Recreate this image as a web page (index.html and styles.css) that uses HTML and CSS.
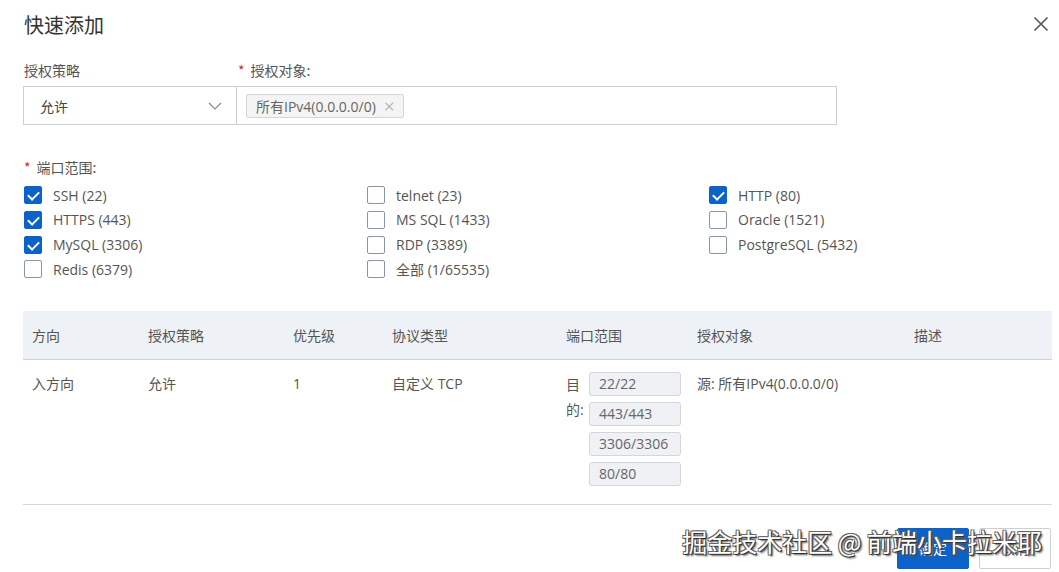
FILE: index.html
```html
<!DOCTYPE html>
<html lang="zh-CN">
<head>
    <meta charset="UTF-8" />
    <title>快速添加</title>
    <link rel="stylesheet" href="styles.css">
</head>
<body>
  <div class="dialog">
    <div class="dialog-header">
      <span class="dialog-title">快速添加</span>
      <svg class="close" width="16" height="16" viewBox="0 0 16 16"><path d="M1.5 1.5 L14.5 14.5 M14.5 1.5 L1.5 14.5" stroke="#555" stroke-width="1.6" fill="none"/></svg>
    </div>

    <div class="form-row">
      <div class="field field-policy">
        <div class="label">授权策略</div>
        <div class="select">
          <span>允许</span>
          <svg width="14" height="8" viewBox="0 0 14 8"><path d="M1 1 L7 7 L13 1" stroke="#888" stroke-width="1.2" fill="none"/></svg>
        </div>
      </div>
      <div class="field field-target">
        <div class="label"><span class="req">*</span>授权对象:</div>
        <div class="tag-input">
          <span class="tag">所有IPv4(0.0.0.0/0)<span class="tag-x">×</span></span>
        </div>
      </div>
    </div>

    <div class="label port-label"><span class="req">*</span>端口范围:</div>
    <div class="checks">
      <label class="check"><span class="box on"></span>SSH (22)</label>
      <label class="check"><span class="box"></span>telnet (23)</label>
      <label class="check"><span class="box on"></span>HTTP (80)</label>
      <label class="check"><span class="box on"></span>HTTPS (443)</label>
      <label class="check"><span class="box"></span>MS SQL (1433)</label>
      <label class="check"><span class="box"></span>Oracle (1521)</label>
      <label class="check"><span class="box on"></span>MySQL (3306)</label>
      <label class="check"><span class="box"></span>RDP (3389)</label>
      <label class="check"><span class="box"></span>PostgreSQL (5432)</label>
      <label class="check"><span class="box"></span>Redis (6379)</label>
      <label class="check"><span class="box"></span>全部 (1/65535)</label>
    </div>

    <table class="rules">
      <colgroup>
        <col style="width:116px"><col style="width:145px"><col style="width:99px"><col style="width:174px">
        <col style="width:131px"><col style="width:217px"><col>
      </colgroup>
      <thead>
        <tr>
          <th>方向</th><th>授权策略</th><th>优先级</th><th>协议类型</th><th>端口范围</th><th>授权对象</th><th>描述</th>
        </tr>
      </thead>
      <tbody>
        <tr>
          <td>入方向</td>
          <td>允许</td>
          <td>1</td>
          <td>自定义 TCP</td>
          <td>
            <div class="ports">
              <span class="ports-label">目的:</span>
              <div class="port-list">
                <span class="port">22/22</span>
                <span class="port">443/443</span>
                <span class="port">3306/3306</span>
                <span class="port">80/80</span>
              </div>
            </div>
          </td>
          <td>源: 所有IPv4(0.0.0.0/0)</td>
          <td></td>
        </tr>
      </tbody>
    </table>

    <div class="footer">
      <button class="btn btn-primary">确定</button>
      <button class="btn">取消</button>
      <div class="watermark">掘金技术社区 @ 前端小卡拉米耶</div>
    </div>
  </div>
</body>
</html>
```

FILE: styles.css
```css
body {
  margin: 0;
  background: #fff;
  font-family: "Open Sans", "Noto Sans CJK SC", sans-serif;
  font-size: 14px;
  color: #555;
}
.dialog {
  padding: 0 7px 0 23px;
  overflow: hidden;
  height: 572px;
}
.dialog-header {
  height: 48px;
  display: flex;
  align-items: center;
  justify-content: space-between;
  padding-left: 1px;
  padding-right: 3px;
}
.dialog-title {
  font-family: "Noto Sans CJK SC", sans-serif;
  font-size: 20px;
  color: #333;
}
.form-row {
  display: flex;
  margin-top: 12px;
}
.label {
  font-family: "Noto Sans CJK SC", sans-serif;
  font-size: 14px;
  line-height: 20px;
  color: #555;
  padding-left: 1px;
  margin-bottom: 6px;
}
.req {
  color: #d9262c;
  margin-right: 6px;
}
.field-policy {
  width: 214px;
}
.field-target {
  width: 600px;
}
.select {
  height: 39px;
  box-sizing: border-box;
  border: 1px solid #cfcfcf;
  display: flex;
  align-items: center;
  justify-content: space-between;
  padding: 0 14px 0 16px;
  font-family: "Noto Sans CJK SC", sans-serif;
  color: #444;
}
.tag-input {
  height: 39px;
  box-sizing: border-box;
  border: 1px solid #cfcfcf;
  border-left: none;
  display: flex;
  align-items: center;
  padding-left: 9px;
}
.tag {
  display: inline-flex;
  align-items: center;
  height: 24px;
  box-sizing: border-box;
  border: 1px solid #d6d6d6;
  border-radius: 2px;
  background: #f4f4f4;
  padding: 0 8px 0 9px;
  color: #666;
}
.tag-x {
  color: #999;
  margin-left: 8px;
  font-size: 19px;
  font-weight: 300;
}
.port-label {
  margin-top: 32px;
  margin-bottom: 6px;
}
.checks {
  display: grid;
  grid-template-columns: 343px 342px 1fr;
  grid-auto-rows: 24.67px;
  padding-left: 1px;
}
.check {
  display: flex;
  align-items: center;
  color: #555;
  font-size: 14px;
}
.box {
  width: 18px;
  height: 18px;
  box-sizing: border-box;
  border: 1px solid #8797aa;
  border-radius: 2px;
  margin-right: 11px;
  position: relative;
}
.box.on {
  background: #0b62c8;
  border-color: #0b62c8;
}
.box.on::after {
  content: "";
  position: absolute;
  left: 5px;
  top: 2px;
  width: 5px;
  height: 9px;
  border: solid #fff;
  border-width: 0 2px 2px 0;
  transform: rotate(45deg);
}
.rules {
  margin-top: 29px;
  width: 1029px;
  border-collapse: collapse;
  table-layout: fixed;
  border-bottom: 1px solid #d9d9d9;
}
.rules th {
  background: #eef1f6;
  height: 48px;
  text-align: left;
  font-weight: normal;
  font-family: "Noto Sans CJK SC", sans-serif;
  color: #555;
  padding: 0 0 0 9px;
  border-bottom: 1px solid #cfd3d8;
}
.rules td {
  vertical-align: top;
  padding: 13px 0 18px 9px;
  line-height: 22px;
  color: #555;
}
.ports {
  display: flex;
}
.ports-label {
  width: 20px;
  line-height: 25px;
  margin-top: -1px;
  margin-right: 3px;
}
.port-list {
  display: flex;
  flex-direction: column;
  gap: 6px;
  margin-top: -1px;
}
.port {
  width: 92px;
  height: 24px;
  box-sizing: border-box;
  border: 1px solid #d3d6da;
  border-radius: 3px;
  background: #eff1f4;
  padding-left: 9px;
  line-height: 22px;
  color: #666;
}
.footer {
  display: flex;
  justify-content: flex-end;
  gap: 10px;
  margin-top: 23px;
  padding-right: 1px;
  position: relative;
}
.btn {
  width: 72px;
  height: 41px;
  border: 1px solid #cfcfcf;
  background: #fff;
  border-radius: 2px;
  font-family: "Noto Sans CJK SC", sans-serif;
  font-size: 14px;
  color: #555;
}
.btn-primary {
  background: #0b62c8;
  border-color: #0b62c8;
  color: #fff;
}
.watermark {
  position: absolute;
  right: 10px;
  top: -4px;
  font-family: "Noto Sans CJK SC", sans-serif;
  font-size: 25px;
  line-height: 34px;
  color: #fff;
  text-shadow: 1px 1px 0 #333, -1px -1px 0 #666, 1px -1px 0 #666, -1px 1px 0 #666, 2px 2px 2px #555;
  white-space: nowrap;
}
```
